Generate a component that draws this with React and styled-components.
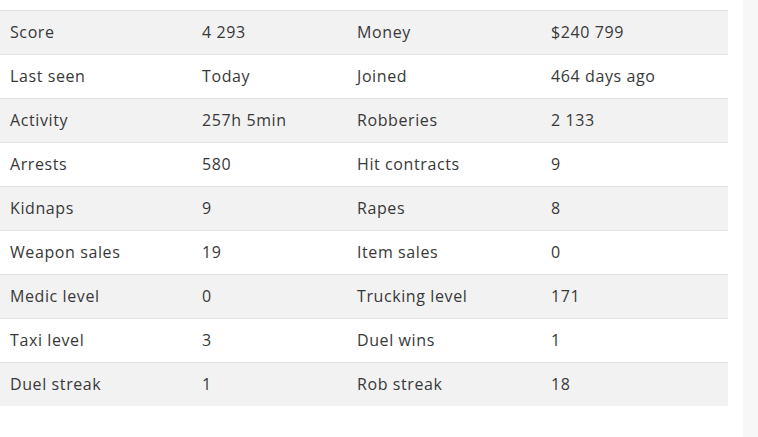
import React from "react";
import styled, { createGlobalStyle } from "styled-components";

const rows = [
  ["Score", "4 293", "Money", "$240 799"],
  ["Last seen", "Today", "Joined", "464 days ago"],
  ["Activity", "257h 5min", "Robberies", "2 133"],
  ["Arrests", "580", "Hit contracts", "9"],
  ["Kidnaps", "9", "Rapes", "8"],
  ["Weapon sales", "19", "Item sales", "0"],
  ["Medic level", "0", "Trucking level", "171"],
  ["Taxi level", "3", "Duel wins", "1"],
  ["Duel streak", "1", "Rob streak", "18"],
];

const widths = [192, 155, 194, 187];

export default function App() {
  return (
    <>
      <GlobalStyle />
      <Page>
        <Main>
          <StatsTable>
            <colgroup>
              {widths.map((w, i) => (
                <col key={i} style={{ width: w }} />
              ))}
            </colgroup>
            <tbody>
              {rows.map((row, index) => (
                <Row key={row[0]} striped={index % 2 === 0}>
                  {row.map((cell, i) => (
                    <Cell key={i}>{cell}</Cell>
                  ))}
                </Row>
              ))}
            </tbody>
          </StatsTable>
        </Main>
        <Track />
      </Page>
    </>
  );
}

const GlobalStyle = createGlobalStyle`
  html, body {
    margin: 0;
    padding: 0;
    background: #fff;
  }
  body {
    font-family: "Open Sans", "Liberation Sans", sans-serif;
    color: #383838;
  }
`;

const Page = styled.div`
  display: flex;
  width: 758px;
  height: 437px;
  overflow: hidden;
`;

const Main = styled.div`
  flex: 1;
  padding-top: 10px;
`;

const Track = styled.div`
  width: 15px;
  background-color: #f7f7f7;
`;

const StatsTable = styled.table`
  width: 728px;
  border-collapse: collapse;
  table-layout: fixed;
`;

const Row = styled.tr`
  background-color: ${(props) => (props.striped ? "#f2f2f2" : "#fff")};
  border-top: 1px solid #dee2e6;
`;

const Cell = styled.td`
  height: 41px;
  padding: 0 10px 2px;
  font-size: 16px;
  font-weight: 400;
  letter-spacing: 0.6px;
  white-space: nowrap;
  vertical-align: middle;
`;
